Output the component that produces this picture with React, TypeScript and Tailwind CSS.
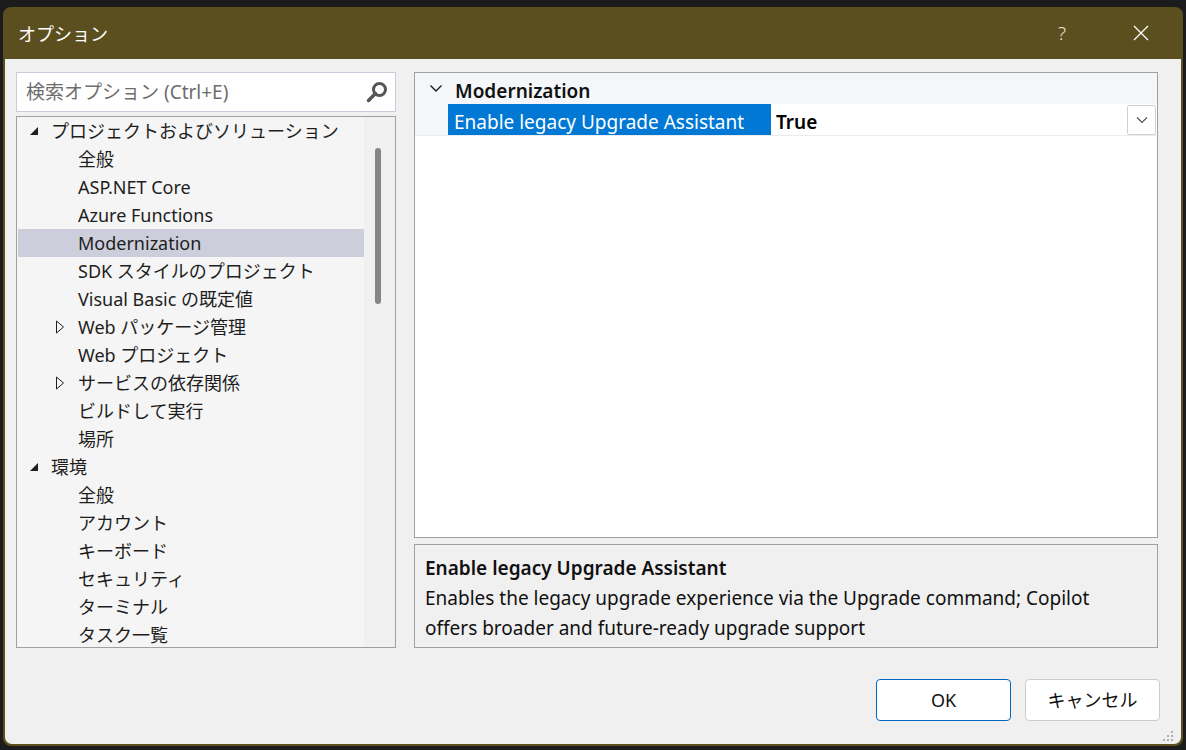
import React from 'react';

type TreeItem = {
  label: string;
  level: 0 | 1;
  expander?: 'open' | 'closed';
  selected?: boolean;
};

const treeItems: TreeItem[] = [
  { label: 'プロジェクトおよびソリューション', level: 0, expander: 'open' },
  { label: '全般', level: 1 },
  { label: 'ASP.NET Core', level: 1 },
  { label: 'Azure Functions', level: 1 },
  { label: 'Modernization', level: 1, selected: true },
  { label: 'SDK スタイルのプロジェクト', level: 1 },
  { label: 'Visual Basic の既定値', level: 1 },
  { label: 'Web パッケージ管理', level: 1, expander: 'closed' },
  { label: 'Web プロジェクト', level: 1 },
  { label: 'サービスの依存関係', level: 1, expander: 'closed' },
  { label: 'ビルドして実行', level: 1 },
  { label: '場所', level: 1 },
  { label: '環境', level: 0, expander: 'open' },
  { label: '全般', level: 1 },
  { label: 'アカウント', level: 1 },
  { label: 'キーボード', level: 1 },
  { label: 'セキュリティ', level: 1 },
  { label: 'ターミナル', level: 1 },
  { label: 'タスク一覧', level: 1 },
];

function Expander({ kind }: { kind: 'open' | 'closed' }) {
  if (kind === 'open') {
    return (
      <svg width="10" height="10" viewBox="0 0 10 10">
        <polygon points="9,1 9,9 1,9" fill="#1e1e1e" />
      </svg>
    );
  }
  return (
    <svg width="10" height="14" viewBox="0 0 10 14">
      <polygon points="1.5,1 8.5,7 1.5,13" fill="none" stroke="#1e1e1e" strokeWidth="1" />
    </svg>
  );
}

function TreeRow({ item }: { item: TreeItem }) {
  return (
    <div
      className={`h-[28px] flex items-center shrink-0 ${
        item.selected ? 'bg-[#cccedb]' : ''
      }`}
    >
      {item.level === 0 ? (
        <>
          <div className="w-[33px] flex justify-end pr-[12px]">
            {item.expander && <Expander kind={item.expander} />}
          </div>
          <span>{item.label}</span>
        </>
      ) : (
        <>
          <div className="w-[60px] flex justify-end pr-[13px]">
            {item.expander && <Expander kind={item.expander} />}
          </div>
          <span>{item.label}</span>
        </>
      )}
    </div>
  );
}

export default function App() {
  return (
    <div
      className="w-[1186px] h-[750px] bg-[#1c1c1c] pt-[7px] pl-[3px] overflow-hidden"
      style={{ fontFamily: '"Noto Sans", "Noto Sans CJK JP", sans-serif' }}
    >
      <div className="w-[1180px] h-[739px] rounded-[8px] bg-[#5b4f1f] px-[2px] pb-[2px] flex flex-col overflow-hidden">
        {/* タイトルバー */}
        <div className="h-[52px] flex items-center shrink-0 text-white">
          <span className="pl-[13px] text-[18px] flex-1 pt-[2px]">オプション</span>
          <span className="text-[19px] text-[#e8e4d4] mr-[66px] font-light">?</span>
          <svg width="18" height="18" viewBox="0 0 18 18" className="mr-[31px]">
            <path d="M2 2 L16 16 M16 2 L2 16" stroke="#ffffff" strokeWidth="1.3" />
          </svg>
        </div>

        {/* 本体 */}
        <div className="flex-1 bg-[#f0f0f0] rounded-b-[7px] flex flex-col pt-[13px] pl-[11px] pr-[23px] relative">
          <div className="flex gap-[18px] h-[576px]">
            {/* 左カラム */}
            <div className="w-[380px] flex flex-col gap-[4px]">
              <div className="h-[40px] bg-white border border-[#c9cbd9] flex items-center pl-[9px] pr-[6px]">
                <span className="flex-1 text-[19px] text-[#6d6d6d]">検索オプション (Ctrl+E)</span>
                <svg width="24" height="24" viewBox="0 0 24 24">
                  <circle cx="14.5" cy="9.5" r="6" fill="none" stroke="#555" strokeWidth="3" />
                  <path d="M10.5 13.5 L3.5 20.5" stroke="#555" strokeWidth="3.5" strokeLinecap="round" />
                </svg>
              </div>
              <div className="flex-1 border border-[#a0a0a0] bg-[#f5f5f5] flex overflow-hidden">
                <div className="flex-1 flex flex-col text-[18px] text-[#1e1e1e] pl-[1px] overflow-hidden">
                  {treeItems.map((item, i) => (
                    <TreeRow key={i} item={item} />
                  ))}
                </div>
                <div className="w-[31px] bg-[#f0f0f0] flex justify-center pt-[31px] shrink-0">
                  <div className="w-[6px] h-[156px] rounded-full bg-[#858585] ml-[-4px]" />
                </div>
              </div>
            </div>

            {/* 右カラム */}
            <div className="flex-1 flex flex-col gap-[6px]">
              <div className="h-[467px] border border-[#a0a0a0] bg-white flex flex-col">
                <div className="h-[31px] bg-[#f4f6fa] flex items-center pt-[6px]">
                  <div className="w-[40px] flex justify-center pl-[2px] pb-[8px]">
                    <svg width="14" height="10" viewBox="0 0 14 10">
                      <path d="M1.5 2.5 L7 8 L12.5 2.5" fill="none" stroke="#1e1e1e" strokeWidth="1.4" />
                    </svg>
                  </div>
                  <span className="text-[19px] font-semibold text-[#111]">Modernization</span>
                </div>
                <div className="h-[32px] flex border-b border-[#ececec] bg-[#f4f6fa]">
                  <div className="w-[33px]" />
                  <div className="w-[323px] bg-[#0078d4] text-white text-[19px] flex items-center pl-[6px] pt-[5px]">
                    Enable legacy Upgrade Assistant
                  </div>
                  <div className="flex-1 bg-white flex items-center pl-[5px] pr-[1px]">
                    <span className="flex-1 text-[19px] font-semibold text-black pt-[5px]">True</span>
                    <div className="w-[29px] h-[30px] border border-[#d0d0d0] rounded-[2px] flex items-center justify-center bg-white">
                      <svg width="12" height="8" viewBox="0 0 12 8">
                        <path d="M1 1.5 L6 6.5 L11 1.5" fill="none" stroke="#555" strokeWidth="1.2" />
                      </svg>
                    </div>
                  </div>
                </div>
                <div className="flex-1" />
              </div>
              <div className="h-[104px] border border-[#a0a0a0] bg-[#f0f0f0] pl-[10px] pr-[40px] pt-[8px] text-[19px] text-[#111] leading-[30px]">
                <div className="font-semibold">Enable legacy Upgrade Assistant</div>
                <div className="leading-[30px]">
                  Enables the legacy upgrade experience via the Upgrade command; Copilot offers broader and future-ready upgrade support
                </div>
              </div>
            </div>
          </div>

          {/* ボタン */}
          <div className="flex justify-end gap-[14px] mt-[31px] mr-[-2px]">
            <button className="w-[135px] h-[42px] bg-white border border-[#0067c0] rounded-[4px] text-[18px] text-[#111]">
              OK
            </button>
            <button className="w-[135px] h-[42px] bg-white border border-[#cccccc] rounded-[4px] text-[18px] text-[#111]">
              キャンセル
            </button>
          </div>

          {/* サイズ変更グリップ */}
          <svg width="12" height="12" viewBox="0 0 12 12" className="absolute right-[6px] bottom-[1px]">
            <rect x="8" y="0" width="2" height="2" fill="#b0b0b0" />
            <rect x="4" y="4" width="2" height="2" fill="#b0b0b0" />
            <rect x="8" y="4" width="2" height="2" fill="#b0b0b0" />
            <rect x="0" y="8" width="2" height="2" fill="#b0b0b0" />
            <rect x="4" y="8" width="2" height="2" fill="#b0b0b0" />
            <rect x="8" y="8" width="2" height="2" fill="#b0b0b0" />
          </svg>
        </div>
      </div>
    </div>
  );
}
